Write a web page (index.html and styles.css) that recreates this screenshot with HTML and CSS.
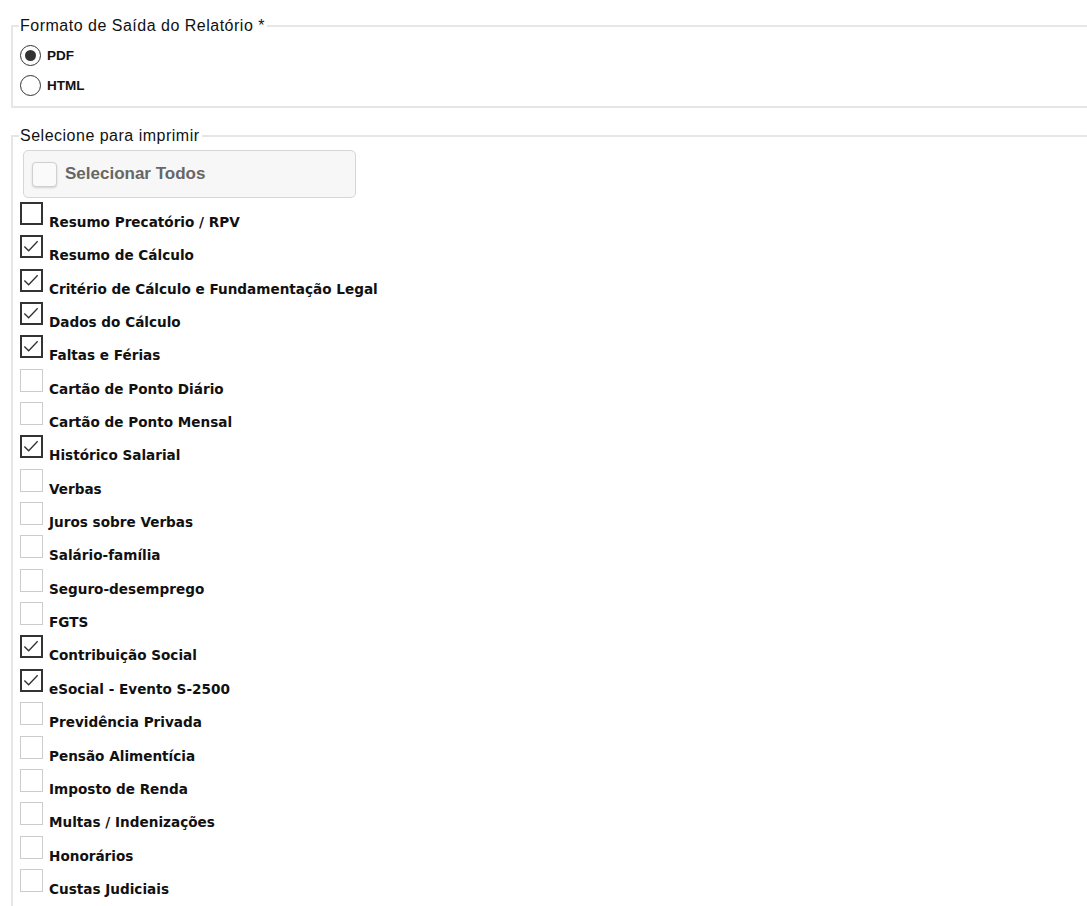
FILE: index.html
```html
<!DOCTYPE html>
<html lang="pt-BR">
<head>
    <meta charset="UTF-8">
    <title>Relatório</title>
    <link rel="stylesheet" href="styles.css">
</head>
<body>
    <fieldset class="group group-format">
        <legend>Formato de Saída do Relatório *</legend>
        <label class="radio-row">
            <span class="radio checked"></span>
            <span>PDF</span>
        </label>
        <label class="radio-row">
            <span class="radio"></span>
            <span>HTML</span>
        </label>
    </fieldset>

    <fieldset class="group group-print">
        <legend>Selecione para imprimir</legend>
        <div class="select-all">
            <span class="select-all-box"></span>
            <span>Selecionar Todos</span>
        </div>
        <ul class="check-list" id="checkList"></ul>
    </fieldset>

    <script>
        const items = [
            ['Resumo Precatório / RPV', 'dark'],
            ['Resumo de Cálculo', 'on'],
            ['Critério de Cálculo e Fundamentação Legal', 'on'],
            ['Dados do Cálculo', 'on'],
            ['Faltas e Férias', 'on'],
            ['Cartão de Ponto Diário', ''],
            ['Cartão de Ponto Mensal', ''],
            ['Histórico Salarial', 'on'],
            ['Verbas', ''],
            ['Juros sobre Verbas', ''],
            ['Salário-família', ''],
            ['Seguro-desemprego', ''],
            ['FGTS', ''],
            ['Contribuição Social', 'on'],
            ['eSocial - Evento S-2500', 'on'],
            ['Previdência Privada', ''],
            ['Pensão Alimentícia', ''],
            ['Imposto de Renda', ''],
            ['Multas / Indenizações', ''],
            ['Honorários', ''],
            ['Custas Judiciais', '']
        ];

        const tick = '<svg viewBox="0 0 20 20" width="19" height="19"><polyline points="2.5,10 7,14.5 16.5,4.5" fill="none" stroke="#333" stroke-width="1.4"/></svg>';

        let html = '';
        for (const [text, state] of items) {
            html += `<li class="check-row">
                <span class="box ${state}">${state === 'on' ? tick : ''}</span>
                <span class="check-label">${text}</span>
            </li>`;
        }
        document.getElementById('checkList').innerHTML = html;
    </script>
</body>
</html>
```

FILE: styles.css
```css
body {
    margin: 0;
    padding: 0;
    background: #fff;
    color: #111;
    font-family: "Liberation Sans", Arial, sans-serif;
    overflow: hidden;
}
.group {
    border: 2px solid #e6e6e6;
    border-right: none;
    margin: 0 0 0 11px;
    padding: 0 0 0 7px;
}
.group legend {
    padding: 0 2px 0 1px;
    margin-left: -1px;
    font-size: 16px;
    letter-spacing: 0.5px;
    color: #111;
    line-height: 16px;
}
.group-format {
    margin-top: 18px;
    height: 80px;
    padding-top: 6px;
}
.group-print {
    margin-top: 20px;
    padding-top: 6px;
    height: 900px;
}
.radio-row {
    display: flex;
    align-items: center;
    gap: 6px;
    height: 30px;
    font-size: 13.5px;
    font-weight: bold;
}
.radio {
    width: 19px;
    height: 19px;
    border: 1.5px solid #333;
    border-radius: 50%;
    position: relative;
    background: #fff;
}
.radio.checked:after {
    content: "";
    position: absolute;
    left: 4px;
    top: 4px;
    width: 11px;
    height: 11px;
    border-radius: 50%;
    background: #333;
}
.select-all {
    display: flex;
    align-items: center;
    gap: 8px;
    width: 323px;
    height: 46px;
    margin-left: 3px;
    padding-left: 8px;
    border: 1.5px solid #d6d6d6;
    border-radius: 5px;
    background: #f7f7f7;
    color: #666;
    font-size: 17px;
    font-weight: bold;
}
.select-all-box {
    width: 23px;
    height: 23px;
    border: 1px solid #d0d0d0;
    border-radius: 4px;
    background: #fafafa;
    box-shadow: 0 1px 2px rgba(0, 0, 0, 0.15);
}
.check-list {
    list-style: none;
    margin: 4px 0 0 0;
    padding: 0;
}
.check-row {
    display: flex;
    align-items: flex-start;
    height: 33.35px;
}
.box {
    flex: none;
    box-sizing: border-box;
    width: 23px;
    height: 23px;
    border: 1.5px solid #ccc;
    background: #fff;
    display: flex;
}
.box.dark,
.box.on {
    border: 2px solid #333;
}
.box svg {
    width: 19px;
    height: 19px;
}
.check-label {
    margin-top: 12px;
    margin-left: 6px;
    font-family: "DejaVu Sans", Verdana, sans-serif;
    font-weight: bold;
    font-size: 13.6px;
    color: #111;
    line-height: 16px;
}
```
